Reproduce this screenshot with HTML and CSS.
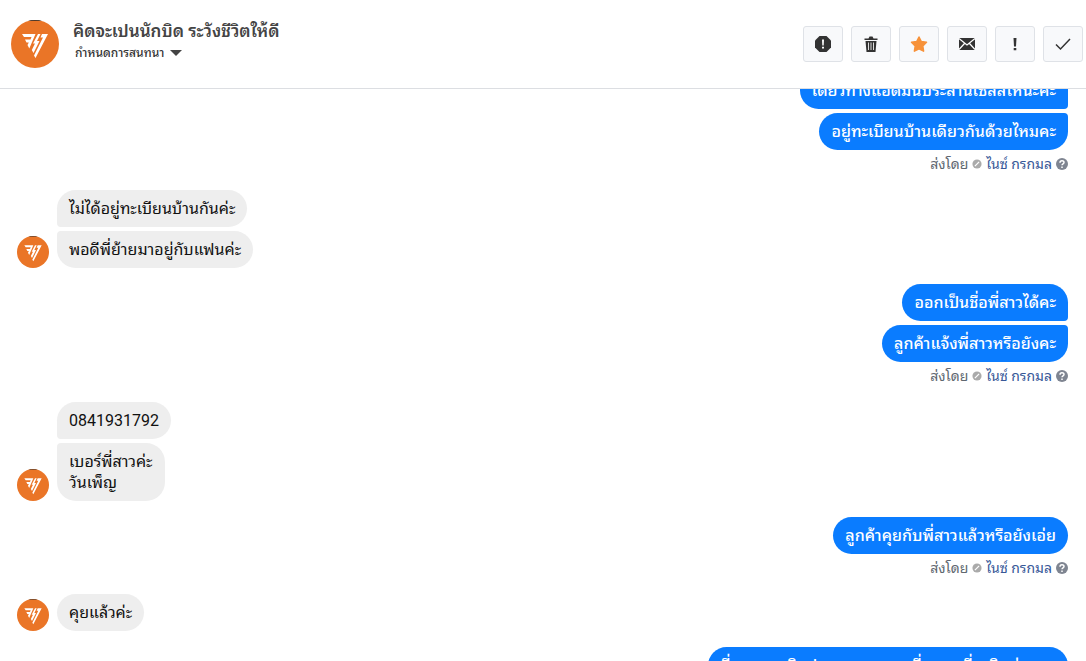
FILE: index.html
```
<!DOCTYPE html>
<html lang="th">
<head>
  <meta charset="UTF-8" />
  <title>แชท</title>
  <link rel="stylesheet" href="styles.css">
</head>
<body>
  <svg class="defs" aria-hidden="true">
    <symbol id="logo" viewBox="0 0 48 48">
      <circle cx="24" cy="24" r="24" fill="#ea7527" />
      <path d="M17 1H31L28 .3H20Z" fill="#222" />
      <path d="M11 14H24.500L18.300 28.500L16.500 25L17.800 22.500H15.500L14 19.500H19.500L20.500 17H13ZM27 14H29.500L26 21H28.500L22.500 33L20.800 30L24 23.500H22ZM31 14H37L24.500 38L23 35.500L32 17.500H29.500Z" fill="#fff" />
    </symbol>
    <symbol id="seal" viewBox="0 0 12 12">
      <circle cx="6" cy="6" r="5.500" fill="#aaa" />
      <path d="M3.500 8.500L8.500 3.500" stroke="#fff" stroke-width="1.500" />
    </symbol>
    <symbol id="help" viewBox="0 0 12 12">
      <circle cx="6" cy="6" r="6" fill="#7f8591" />
      <path d="M4 4.700C4 2 8 2 8 4.500C8 6 6 5.700 6 7.300M6 8.500V10" fill="none" stroke="#fff" stroke-width="1.500" />
    </symbol>
  </svg>

  <header class="topbar">
    <svg class="logo"><use href="#logo" /></svg>
    <div class="title">
      <h1>คิดจะเปนนักบิด ระวังชีวิตให้ดี</h1>
      <button class="schedule">กำหนดการสนทนา <span class="caret"></span></button>
    </div>
    <div class="actions">
      <button aria-label="สแปม"><svg viewBox="0 0 18 18"><path d="M5.500 1H12.500L17 5.500V12.500L12.500 17H5.500L1 12.500V5.500Z" fill="#333" /><path d="M8 4.500H10L9.700 10.500H8.300ZM8 11.700H10V13.500H8Z" fill="#fff" /></svg></button>
      <button aria-label="ลบ"><svg viewBox="0 0 18 18"><path d="M2.500 3.500H6.500L7.500 1.500H10.500L11.500 3.500H15.500V5H2.500ZM3.500 6H14.500L13.500 17H4.500Z" fill="#333" /><path d="M6.500 7.500V15M9 7.500V15M11.500 7.500V15" stroke="#ddd" stroke-width="1" /></svg></button>
      <button aria-label="ติดดาว"><svg viewBox="0 0 18 18"><path d="M9 2L11.300 6.600L16.500 7.300L12.800 11L13.600 16.200L9 13.800L4.400 16.200L5.200 11L1.500 7.300L6.700 6.600Z" fill="#f7923a" stroke="#f7923a" stroke-width="1.500" stroke-linejoin="round" /></svg></button>
      <button aria-label="ยังไม่อ่าน"><svg viewBox="0 0 18 18"><path d="M1 3H17V15H1Z" fill="#333" /><path d="M1 3.500L9 10L17 3.500M1 14.500L6.500 8.500M17 14.500L11.500 8.500" fill="none" stroke="#fff" stroke-width="1.200" /></svg></button>
      <button aria-label="ติดตาม"><svg viewBox="0 0 18 18"><path d="M7.500 3H10.500L10 11.500H8ZM7.700 13H10.300V15.200H7.700Z" fill="#333" /></svg></button>
      <button aria-label="เสร็จสิ้น"><svg viewBox="0 0 18 18"><path d="M2 9.500L6.500 14L16 4" fill="none" stroke="#333" stroke-width="1.500" /></svg></button>
    </div>
  </header>

  <main class="chat">
    <section class="group sent">
      <p class="bubble">เดี๋ยวทางแอดมินประสานเซลล์ให้นะคะ</p>
      <p class="bubble">อยู่ทะเบียนบ้านเดียวกันด้วยไหมคะ</p>
      <div class="meta">ส่งโดย <svg><use href="#seal" /></svg> <a href="#">ไนซ์ กรกมล</a> <svg class="help"><use href="#help" /></svg></div>
    </section>
    <section class="group received">
      <svg class="avatar"><use href="#logo" /></svg>
      <div class="bubbles">
        <p class="bubble">ไม่ได้อยู่ทะเบียนบ้านกันค่ะ</p>
        <p class="bubble">พอดีพี่ย้ายมาอยู่กับแฟนค่ะ</p>
      </div>
    </section>
    <section class="group sent">
      <p class="bubble">ออกเป็นชื่อพี่สาวได้คะ</p>
      <p class="bubble">ลูกค้าแจ้งพี่สาวหรือยังคะ</p>
      <div class="meta">ส่งโดย <svg><use href="#seal" /></svg> <a href="#">ไนซ์ กรกมล</a> <svg class="help"><use href="#help" /></svg></div>
    </section>
    <section class="group received">
      <svg class="avatar"><use href="#logo" /></svg>
      <div class="bubbles">
        <p class="bubble">0841931792</p>
        <p class="bubble">เบอร์พี่สาวค่ะ<br>วันเพ็ญ</p>
      </div>
    </section>
    <section class="group sent">
      <p class="bubble single">ลูกค้าคุยกับพี่สาวแล้วหรือยังเอ่ย</p>
      <div class="meta">ส่งโดย <svg><use href="#seal" /></svg> <a href="#">ไนซ์ กรกมล</a> <svg class="help"><use href="#help" /></svg></div>
    </section>
    <section class="group received">
      <svg class="avatar"><use href="#logo" /></svg>
      <div class="bubbles">
        <p class="bubble single">คุยแล้วค่ะ</p>
      </div>
    </section>
    <section class="group sent">
      <p class="bubble">ที่ทางแอดมินประสานงานของพี่สาวคะที่จะติดต่อนะค</p>
    </section>
  </main>
</body>
</html>
```
FILE: styles.css
```
* {
  box-sizing: border-box;
}
body {
  margin: 0;
  height: 100vh;
  display: flex;
  flex-direction: column;
  overflow: hidden;
  font-family: Roboto, Tahoma, "Noto Sans Thai Looped", Loma, Waree, Umpush, Garuda, "Noto Sans", sans-serif;
  font-size: 16px;
  color: #111;
  background: #fff;
}
button {
  font-family: inherit;
  cursor: pointer;
}
.defs {
  display: none;
}
.topbar {
  flex: none;
  display: flex;
  align-items: flex-start;
  gap: 14px;
  padding: 20px 3px 20px 11px;
  border-bottom: 1px solid #dcdee2;
}
.logo {
  width: 48px;
  height: 48px;
}
.title {
  flex: 1;
}
h1 {
  margin: 0;
  font-size: 17px;
  line-height: 23px;
  font-weight: 600;
  color: #444;
}
.schedule {
  display: flex;
  align-items: center;
  gap: 6px;
  padding: 0 2px;
  border: 0;
  background: none;
  font-size: 12px;
  line-height: 20px;
  font-weight: 500;
  color: #333;
}
.caret {
  border: 6px solid transparent;
  border-top-color: #444;
  border-bottom: 0;
}
.actions {
  display: flex;
  gap: 8px;
  padding-top: 6px;
}
.actions button {
  display: flex;
  align-items: center;
  justify-content: center;
  width: 40px;
  height: 36px;
  padding: 0;
  border: 1px solid #dfe2e7;
  border-radius: 3px;
  background: #f8f9fb;
}
.actions svg {
  width: 18px;
  height: 18px;
}
.chat {
  flex: 1;
  min-height: 0;
  overflow: hidden;
  display: flex;
  flex-direction: column;
  gap: 16px;
  padding: 0 18px 0 17px;
}
/* thread is scrolled a little past the first bubble */
.group:first-child {
  margin-top: -17px;
}
.group {
  flex: none;
  display: flex;
}
.sent {
  flex-direction: column;
  align-items: flex-end;
  gap: 4px;
}
.received {
  align-items: flex-end;
  gap: 8px;
}
.bubbles {
  display: flex;
  flex-direction: column;
  align-items: flex-start;
  gap: 4px;
}
.bubble {
  margin: 0;
  padding: 8px 12px;
  line-height: 21px;
  border-radius: 19px;
  white-space: nowrap;
}
.sent .bubble {
  background: #0a7cff;
  color: #fff;
  font-weight: 500;
}
.received .bubble {
  background: #eee;
}
.sent .bubble:not(.single):not(:last-child) {
  border-bottom-right-radius: 4px;
}
.sent .bubble + .bubble {
  border-top-right-radius: 4px;
}
.sent .bubble:nth-child(2):not(:last-child) {
  border-bottom-right-radius: 19px;
}
.received .bubble:not(:last-child) {
  border-bottom-left-radius: 4px;
}
.received .bubble + .bubble {
  border-top-left-radius: 4px;
}
.avatar {
  width: 32px;
  height: 32px;
}
.meta {
  display: flex;
  align-items: center;
  gap: 4px;
  height: 20px;
  font-size: 14px;
  line-height: 20px;
  color: #606770;
}
.meta a {
  color: #385898;
  text-decoration: none;
}
.meta svg {
  width: 10px;
  height: 10px;
}
.meta .help {
  width: 12px;
  height: 12px;
}
```
